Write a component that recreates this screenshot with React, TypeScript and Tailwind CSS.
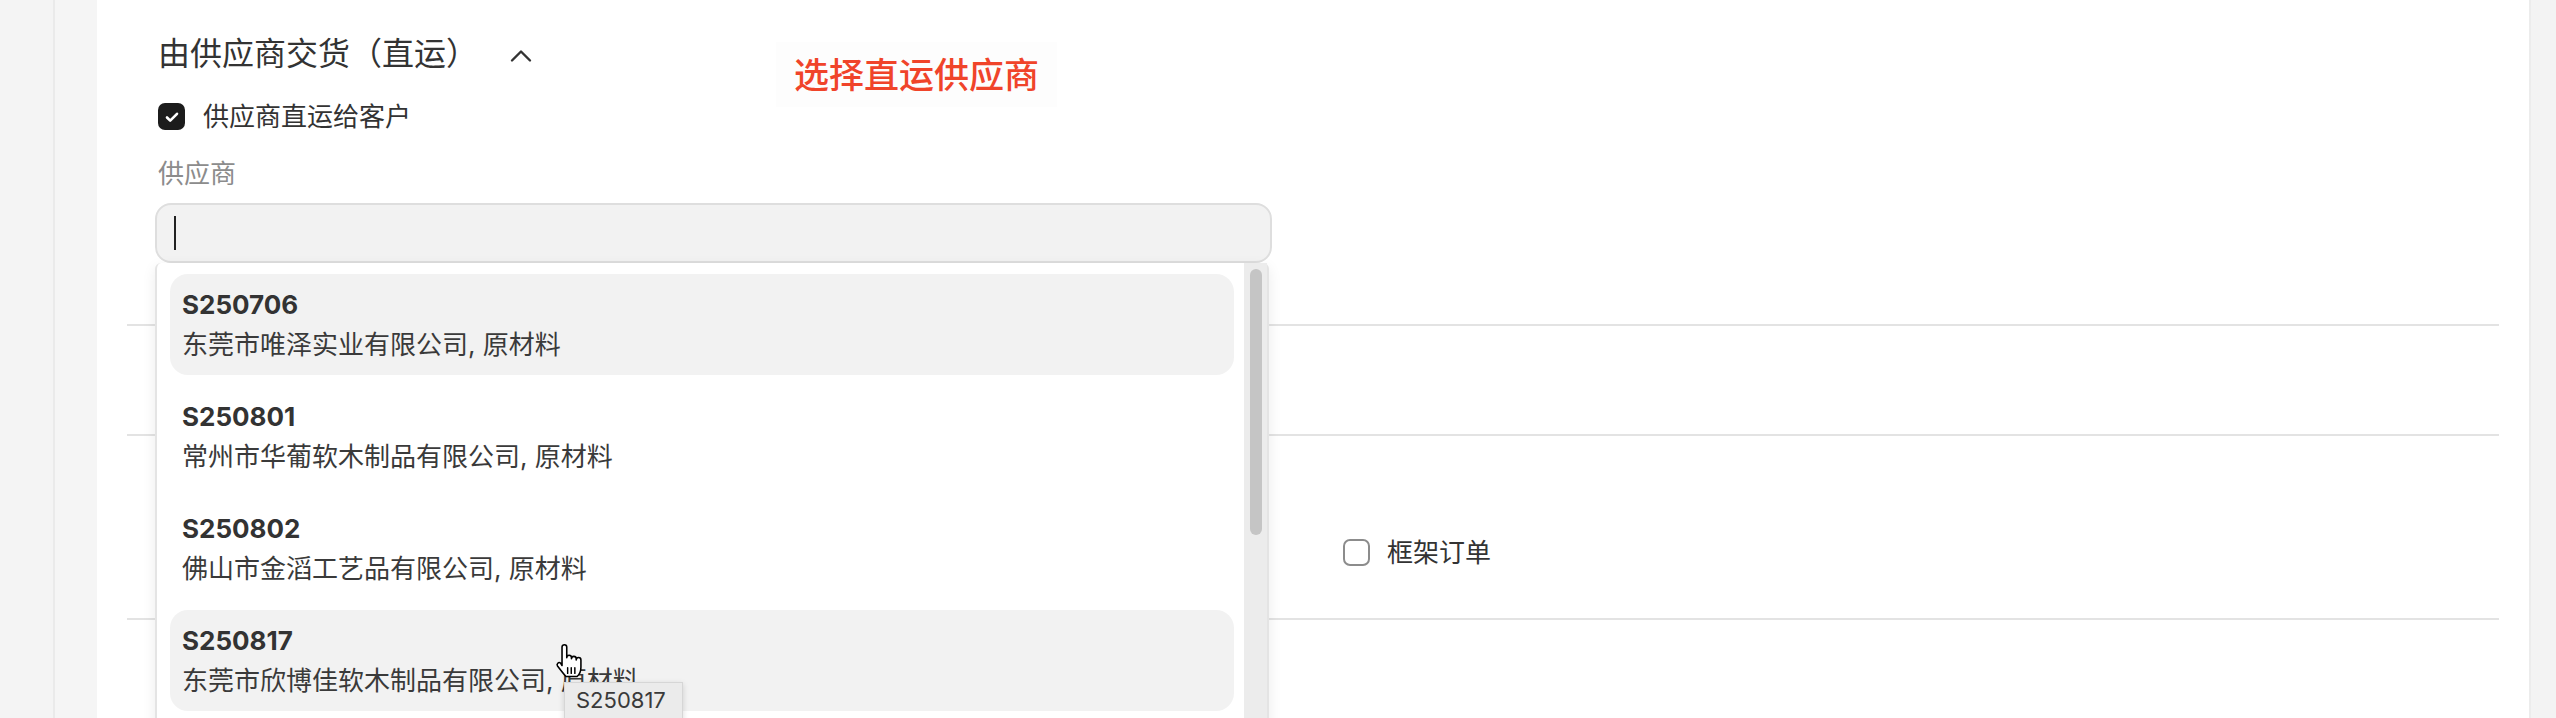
import { ChevronUp } from "lucide-react";

type Supplier = { code: string; name: string; hover?: boolean };

const suppliers: Supplier[] = [
  { code: "S250706", name: "东莞市唯泽实业有限公司, 原材料", hover: true },
  { code: "S250801", name: "常州市华葡软木制品有限公司, 原材料" },
  { code: "S250802", name: "佛山市金滔工艺品有限公司, 原材料" },
  { code: "S250817", name: "东莞市欣博佳软木制品有限公司, 原材料", hover: true },
];

function Check({ checked }: { checked: boolean }) {
  return checked ? (
    <span className="w-[27px] h-[27px] rounded-[7px] bg-[#1c1c1c] flex items-center justify-center flex-shrink-0">
      <svg width="16" height="16" viewBox="0 0 16 16" fill="none">
        <path d="M3 8.5l3.2 3.2L13 4.8" stroke="white" strokeWidth="2.6" strokeLinecap="round" strokeLinejoin="round" />
      </svg>
    </span>
  ) : (
    <span className="w-[27px] h-[27px] rounded-[7px] border-2 border-[#8c8c8c] bg-white flex-shrink-0" />
  );
}

function HandCursor() {
  // macOS pointing-hand cursor
  return (
    <svg width="36" height="36" viewBox="0 0 32 32" fill="none">
      <path
        d="M9.8 3.6a2.1 2.1 0 0 1 4.2 0V13a2.1 2.1 0 0 1 4.2 0v1a2.1 2.1 0 0 1 4.2 0v1a2.1 2.1 0 0 1 4.2 0v6.5c0 3.8-1.8 7-3.6 8.3H13.4c-2-2-4.8-5.7-7.6-9.4a1.9 1.9 0 0 1 2.7-2.6L9.8 20Z"
        fill="white"
        stroke="black"
        strokeWidth="1.4"
        strokeLinejoin="round"
      />
      <path d="M14.8 22v5M18 22v5M21.2 22v5" stroke="black" strokeWidth="1.3" strokeLinecap="round" />
    </svg>
  );
}

function SupplierItem({ s }: { s: Supplier }) {
  return (
    <div className={`shrink-0 h-[101px] rounded-[18px] px-[12px] pt-[14px] ${s.hover ? "bg-[#f2f2f2]" : ""}`}>
      <p className="h-[34px] leading-[34px] text-[26px] font-bold text-[#333333]">{s.code}</p>
      <p className="mt-[6px] h-[34px] leading-[34px] text-[26px] text-[#3a3a3a] whitespace-nowrap">{s.name}</p>
    </div>
  );
}

export default function App() {
  return (
    <div className="flex h-[718px] w-full overflow-hidden font-['Inter','Noto_Sans_CJK_SC',sans-serif]">
      {/* left rail */}
      <div className="w-[53px] bg-[#f4f4f4]" />
      <div className="w-[2px] bg-[#eaeaea]" />
      <div className="w-[42px] bg-[#f5f5f5]" />

      <main className="relative flex-1 bg-white overflow-hidden">
        <div className="px-[30px]">
          {/* 由供应商交货 */}
          <section className="h-[326px] border-b-2 border-[#e3e3e3] pl-[31px] pt-[34px]">
            <div className="flex items-center h-[40px]">
              <h2 className="text-[32px] leading-[40px] text-[#333333]">由供应商交货（直运）</h2>
              <ChevronUp className="ml-[25px] mt-[4px] w-[36px] h-[36px] text-[#333333]" strokeWidth={1.6} />
            </div>
            <label className="mt-[29px] flex items-center gap-[18px] h-[27px]">
              <Check checked />
              <span className="text-[26px] text-[#333333]">供应商直运给客户</span>
            </label>
            <p className="mt-[27px] h-[34px] leading-[34px] text-[26px] text-[#8c8c8c]">供应商</p>
            <div className="mt-[12px] -ml-[3px] w-[1117px] h-[60px] rounded-[16px] border-2 border-[#dedede] bg-[#f2f2f2] flex items-center pl-[17px]">
              <span className="w-[2px] h-[34px] bg-[#222222]" />
            </div>
          </section>

          <section className="h-[110px] border-b-2 border-[#e3e3e3]" />

          <section className="h-[184px] border-b-2 border-[#e3e3e3] pl-[31px] pt-[103px]">
            <div className="grid grid-cols-[1111px_1fr] gap-x-[74px]">
              <div />
              <label className="flex items-center gap-[17px] h-[27px]">
                <Check checked={false} />
                <span className="text-[26px] text-[#333333]">框架订单</span>
              </label>
            </div>
          </section>

          <section className="h-[200px]" />
        </div>

        {/* annotation */}
        <div className="absolute left-[679px] top-[42px] h-[65px] w-[281px] bg-[#fdfdfd] pl-[18px] pt-[11px]">
          <span className="text-[35px] leading-[44px] font-medium text-[#f0442a]">选择直运供应商</span>
        </div>

        {/* supplier dropdown */}
        <div className="absolute left-[58px] top-[263px] w-[1114px] h-[480px] bg-white border-x-2 border-[#e4e4e4] rounded-t-[6px] shadow-[0_4px_14px_rgba(0,0,0,0.08)] flex">
          <div className="flex-1 pl-[13px] pt-[11px] flex flex-col gap-[11px] overflow-hidden">
            {suppliers.map((s) => (
              <SupplierItem key={s.code} s={s} />
            ))}
          </div>
          <div className="ml-[10px] w-[23px] bg-[#ececec] flex justify-center pt-[6px]">
            <div className="w-[12px] h-[266px] rounded-full bg-[#c5c5c5]" />
          </div>
        </div>

        {/* hover tooltip + pointer */}
        <div className="absolute left-[454px] top-[643px]">
          <HandCursor />
        </div>
        <div className="absolute left-[467px] top-[682px] w-[119px] h-[44px] bg-[#ebebeb] border border-[#d6d6d6] shadow-[0_2px_6px_rgba(0,0,0,0.15)] pl-[11px]">
          <span className="text-[22px] leading-[34px] text-[#3a3a3a]">S250817</span>
        </div>
      </main>

      {/* right rail */}
      <div className="w-[27px] bg-[#f3f3f3] border-l-2 border-[#ececec]" />
    </div>
  );
}
